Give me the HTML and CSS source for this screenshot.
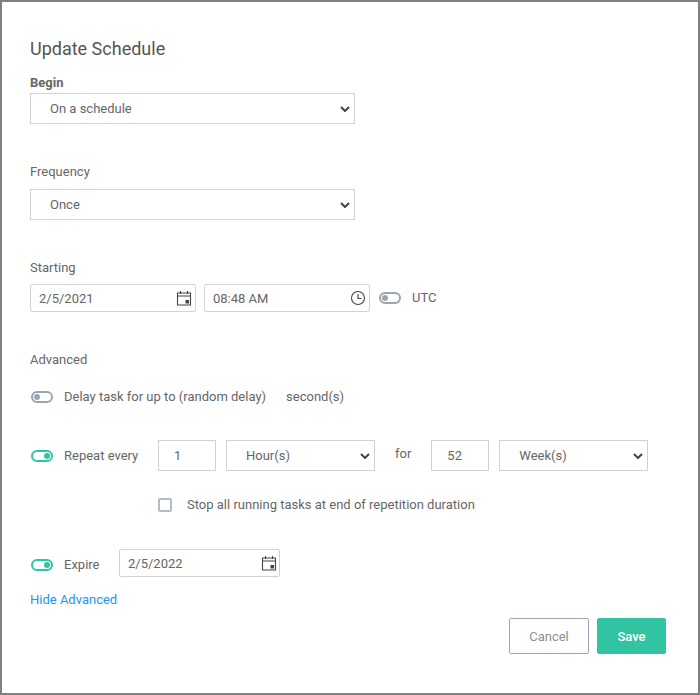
FILE: index.html
```html
<!DOCTYPE html>
<html>
<head>
<meta charset="utf-8">
<title>Update Schedule</title>
<link rel="stylesheet" href="styles.css">
</head>
<body>
<div class="dialog">
	<h1 class="title">Update Schedule</h1>

	<div class="field fieldBegin">
		<label class="label bold">Begin</label>
		<div class="selectBox wide">
			<select class="select"><option>On a schedule</option></select>
			<svg class="chevron" viewBox="0 0 10 6"><path d="M1 1l4 4 4-4" fill="none" stroke="#444" stroke-width="2"/></svg>
		</div>
	</div>

	<div class="field fieldFrequency">
		<label class="label">Frequency</label>
		<div class="selectBox wide">
			<select class="select"><option>Once</option></select>
			<svg class="chevron" viewBox="0 0 10 6"><path d="M1 1l4 4 4-4" fill="none" stroke="#444" stroke-width="2"/></svg>
		</div>
	</div>

	<div class="field fieldStarting">
		<label class="label">Starting</label>
		<div class="row">
			<div class="pick">
				<span>2/5/2021</span>
				<svg class="icon" viewBox="0 0 16 16"><path d="M1.5 3h13v12h-13zM1.5 6h13M4.5 1v3M11.5 1v3" fill="none" stroke="#444" stroke-width="1.1"/><rect x="9.5" y="10" width="3.5" height="3.5" fill="#444"/></svg>
			</div>
			<div class="pick">
				<span>08:48 AM</span>
				<svg class="icon" viewBox="0 0 16 16"><circle cx="8" cy="8" r="6.5" fill="none" stroke="#444" stroke-width="1.1"/><path d="M8 4v4.5h3.5" fill="none" stroke="#444" stroke-width="1.1"/></svg>
			</div>
			<span class="toggle utcToggle"></span>
			<span class="text">UTC</span>
		</div>
	</div>

	<div class="advanced">Advanced</div>

	<div class="row delayRow">
		<span class="toggle"></span>
		<span class="text">Delay task for up to (random delay)</span>
		<span class="text seconds">second(s)</span>
	</div>

	<div class="row repeatRow">
		<span class="toggle on"></span>
		<span class="text repeatLabel">Repeat every</span>
		<input class="num" type="text" value="1">
		<div class="selectBox unit">
			<select class="select"><option>Hour(s)</option></select>
			<svg class="chevron" viewBox="0 0 10 6"><path d="M1 1l4 4 4-4" fill="none" stroke="#444" stroke-width="2"/></svg>
		</div>
		<span class="text forLabel">for</span>
		<input class="num" type="text" value="52">
		<div class="selectBox unit">
			<select class="select"><option>Week(s)</option></select>
			<svg class="chevron" viewBox="0 0 10 6"><path d="M1 1l4 4 4-4" fill="none" stroke="#444" stroke-width="2"/></svg>
		</div>
	</div>

	<div class="row stopRow">
		<span class="check"></span>
		<span class="text">Stop all running tasks at end of repetition duration</span>
	</div>

	<div class="row expireRow">
		<span class="toggle on"></span>
		<span class="text expireLabel">Expire</span>
		<div class="pick expirePick">
			<span>2/5/2022</span>
			<svg class="icon" viewBox="0 0 16 16"><path d="M1.5 3h13v12h-13zM1.5 6h13M4.5 1v3M11.5 1v3" fill="none" stroke="#444" stroke-width="1.1"/><rect x="9.5" y="10" width="3.5" height="3.5" fill="#444"/></svg>
		</div>
	</div>

	<a class="hide">Hide Advanced</a>

	<div class="operation">
		<button class="btn cancel">Cancel</button>
		<button class="btn save">Save</button>
	</div>
</div>
</body>
</html>
```

FILE: styles.css
```css
html, body{
	margin:0;
	padding:0;
	background:white;
}
body{
	font-family:Roboto, "Liberation Sans", sans-serif;
	font-size:13px;
	color:#666;
}
.dialog{
	box-sizing:border-box;
	width:700px;
	height:695px;
	border:2px solid #808080;
	padding:37px 32px 0 28px;
}
.title{
	margin:0;
	font-size:18px;
	line-height:20px;
	font-weight:400;
	color:#555;
}
.field{
	display:flex;
	flex-direction:column;
}
.fieldBegin{
	margin-top:16px;
}
.fieldFrequency{
	margin-top:40px;
}
.fieldStarting{
	margin-top:40px;
}
.label{
	line-height:16px;
}
.bold{
	font-weight:700;
	margin-bottom:2px;
}
.fieldFrequency .label{
	margin-bottom:9px;
}
.fieldStarting .label{
	margin-bottom:8px;
}
.row{
	display:flex;
	align-items:center;
}
.selectBox{
	position:relative;
	height:31px;
}
.select{
	display:block;
	box-sizing:border-box;
	width:100%;
	height:31px;
	appearance:none;
	border:1px solid #d2d2d2;
	border-radius:0;
	background-color:white;
	padding:0 0 0 19px;
	font-family:inherit;
	font-size:13px;
	color:#666;
	outline:none;
}
.chevron{
	position:absolute;
	right:5px;
	top:13px;
	width:10px;
	height:6px;
	pointer-events:none;
}
.wide{
	width:325px;
}
.unit{
	width:149px;
}
.pick{
	box-sizing:border-box;
	width:166px;
	height:28px;
	margin-right:8px;
	padding:0 3px 0 8px;
	border:1px solid #d2d2d2;
	border-radius:2px;
	display:flex;
	align-items:center;
	justify-content:space-between;
}
.icon{
	width:16px;
	height:16px;
}
.text{
	line-height:16px;
}
.toggle{
	box-sizing:border-box;
	display:block;
	width:22px;
	height:12px;
	border:2px solid #9aa5b1;
	border-radius:6px;
	background:white;
	position:relative;
	flex-shrink:0;
}
.toggle:after{
	content:"";
	position:absolute;
	left:1px;
	top:1px;
	width:6px;
	height:6px;
	border-radius:50%;
	background:#9aa5b1;
}
.toggle.on{
	border-color:#30c4a2;
}
.toggle.on:after{
	left:auto;
	right:1px;
	background:#30c4a2;
}
.utcToggle{
	margin:0 11px 0 1px;
}
.advanced{
	margin-top:40px;
	line-height:16px;
}
.delayRow{
	margin-top:21px;
}
.delayRow .toggle{
	margin-left:1px;
	margin-right:11px;
}
.seconds{
	margin-left:20px;
}
.repeatRow{
	margin-top:35px;
}
.repeatRow .toggle{
	margin-left:1px;
	margin-right:11px;
}
.repeatLabel{
	width:94px;
}
.num{
	box-sizing:border-box;
	width:58px;
	height:31px;
	border:1px solid #d2d2d2;
	padding:0 0 0 15px;
	font-family:inherit;
	font-size:13px;
	color:#666;
	outline:none;
	margin-right:10px;
}
.forLabel{
	margin:0 20px 0 20px;
	position:relative;
	top:-2px;
}
.stopRow{
	margin-top:26px;
	padding-left:128px;
}
.check{
	box-sizing:border-box;
	width:14px;
	height:14px;
	border:2px solid #b4bcc4;
	border-radius:2px;
	margin-right:15px;
}
.expireRow{
	margin-top:36px;
}
.expireRow .toggle{
	margin-left:1px;
	margin-right:11px;
	position:relative;
	top:2px;
}
.expireLabel{
	width:55px;
	position:relative;
	top:2px;
}
.expirePick{
	width:161px;
	padding-right:2px;
}
.hide{
	display:block;
	margin-top:15px;
	line-height:16px;
	color:#2196f3;
}
.operation{
	display:flex;
	justify-content:flex-end;
	margin-top:10px;
	gap:8px;
}
.btn{
	box-sizing:border-box;
	height:36px;
	border-radius:2px;
	font-family:inherit;
	font-size:13px;
}
.cancel{
	width:80px;
	background:white;
	border:1px solid #9aa5b1;
	color:#8a8f94;
}
.save{
	width:69px;
	background:#30c4a2;
	border:1px solid #30c4a2;
	color:white;
	font-weight:500;
}
```
